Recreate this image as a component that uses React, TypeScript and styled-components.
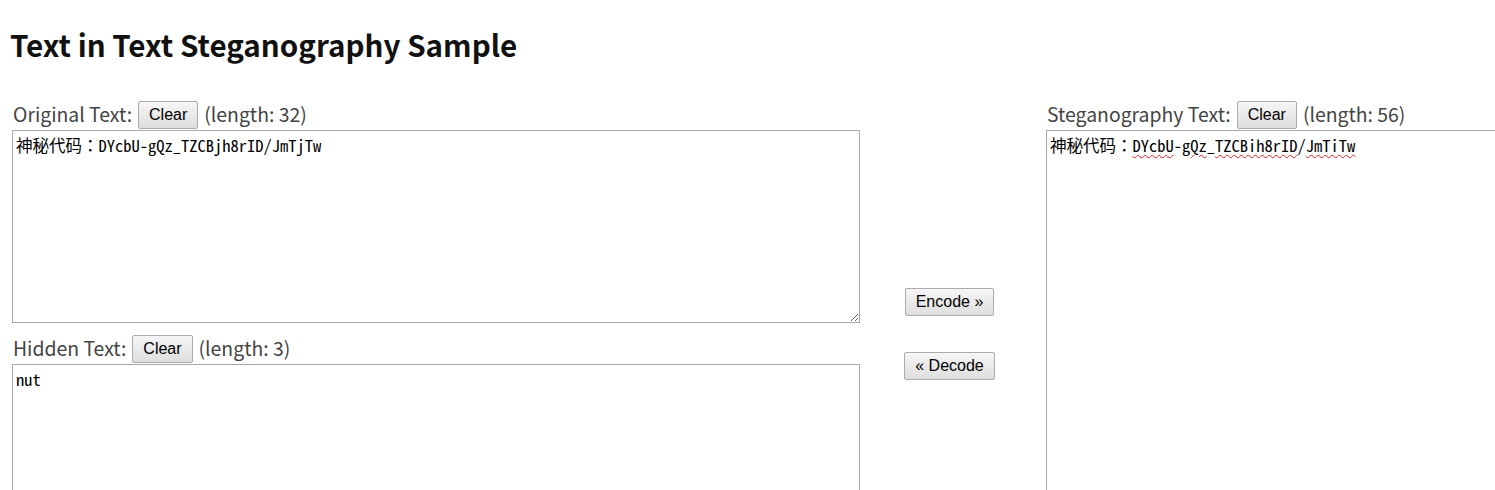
import React from "react";
import styled, { createGlobalStyle } from "styled-components";

const Global = createGlobalStyle`
  html, body { margin: 0; padding: 0; background: #fff; overflow: hidden; }
  body { font-family: "Noto Sans CJK JP", "Noto Sans", sans-serif; color: #333; }
`;

const Page = styled.div`
  width: 1495px;
  height: 490px;
  overflow: hidden;
`;

const Title = styled.h1`
  margin: 0;
  padding: 26px 0 0 10px;
  height: 73px;
  box-sizing: border-box;
  font-family: "Noto Sans CJK JP", "Noto Sans", sans-serif;
  font-weight: 700;
  font-size: 29.6px;
  line-height: 38px;
  color: #111;
`;

const Columns = styled.div`
  display: flex;
  padding-left: 12px;
  padding-top: 27px;
`;

const Side = styled.div`
  width: 848px;
  flex: none;
  display: flex;
  flex-direction: column;
`;

const Middle = styled.div`
  width: 186px;
  flex: none;
  display: flex;
  flex-direction: column;
  align-items: center;
  padding-top: 188px;
  gap: 36px;
  padding-right: 7px;
  box-sizing: border-box;
`;

const LabelRow = styled.div`
  display: flex;
  align-items: center;
  gap: 6px;
  height: 30px;
  font-size: 19.4px;
  color: #444;
  padding-left: 1px;
`;

const Lbl = styled.span`
  padding-bottom: 4px;
`;

const Btn = styled.button`
  font-family: "Liberation Sans", Arial, sans-serif;
  font-size: 16px;
  color: #000;
  background: linear-gradient(#f6f6f6, #dedede);
  border: 1px solid #acacac;
  border-radius: 2px;
  padding: 0 10px;
  height: 28px;
  cursor: pointer;
`;

const Area = styled.textarea<{ $h: number }>`
  display: block;
  width: 848px;
  height: ${(p) => p.$h}px;
  box-sizing: border-box;
  border: 1px solid #a9a9a9;
  padding: 4px 3px;
  margin: 0;
  resize: both;
  font-family: "Noto Sans Mono CJK JP", "DejaVu Sans Mono", monospace;
  font-size: 16.5px;
  line-height: 20px;
  color: #000;
  outline: none;
`;

const Box = styled.div`
  width: 848px;
  height: 400px;
  box-sizing: border-box;
  border: 1px solid #a9a9a9;
  padding: 4px 3px;
  font-family: "Noto Sans Mono CJK JP", "DejaVu Sans Mono", monospace;
  font-size: 16.5px;
  line-height: 20px;
  color: #000;
  white-space: pre;
`;

const Wavy = styled.span`
  text-decoration: underline wavy #e02020;
  text-decoration-thickness: 1px;
  text-underline-offset: 2px;
`;

const Gap = styled.div`
  height: 11px;
`;

export default function App() {
  const orig = "神秘代码：DYcbU-gQz_TZCBjh8rID/JmTjTw";
  return (
    <Page>
      <Global />
      <Title>Text in Text Steganography Sample</Title>
      <Columns>
        <Side>
          <LabelRow>
            <Lbl>Original Text:</Lbl> <Btn>Clear</Btn> <Lbl>(length: 32)</Lbl>
          </LabelRow>
          <Area $h={193} defaultValue={orig} spellCheck={false} />
          <Gap />
          <LabelRow>
            <Lbl>Hidden Text:</Lbl> <Btn>Clear</Btn> <Lbl>(length: 3)</Lbl>
          </LabelRow>
          <Area $h={200} defaultValue="nut" spellCheck={false} />
        </Side>
        <Middle>
          <Btn>Encode »</Btn>
          <Btn>« Decode</Btn>
        </Middle>
        <Side>
          <LabelRow>
            <Lbl>Steganography Text:</Lbl> <Btn>Clear</Btn> <Lbl>(length: 56)</Lbl>
          </LabelRow>
          <Box>
            神秘代码：<Wavy>DYcbU</Wavy>-<Wavy>gQz</Wavy>_<Wavy>TZCBih8rID</Wavy>/<Wavy>JmTiTw</Wavy>
          </Box>
        </Side>
      </Columns>
    </Page>
  );
}
